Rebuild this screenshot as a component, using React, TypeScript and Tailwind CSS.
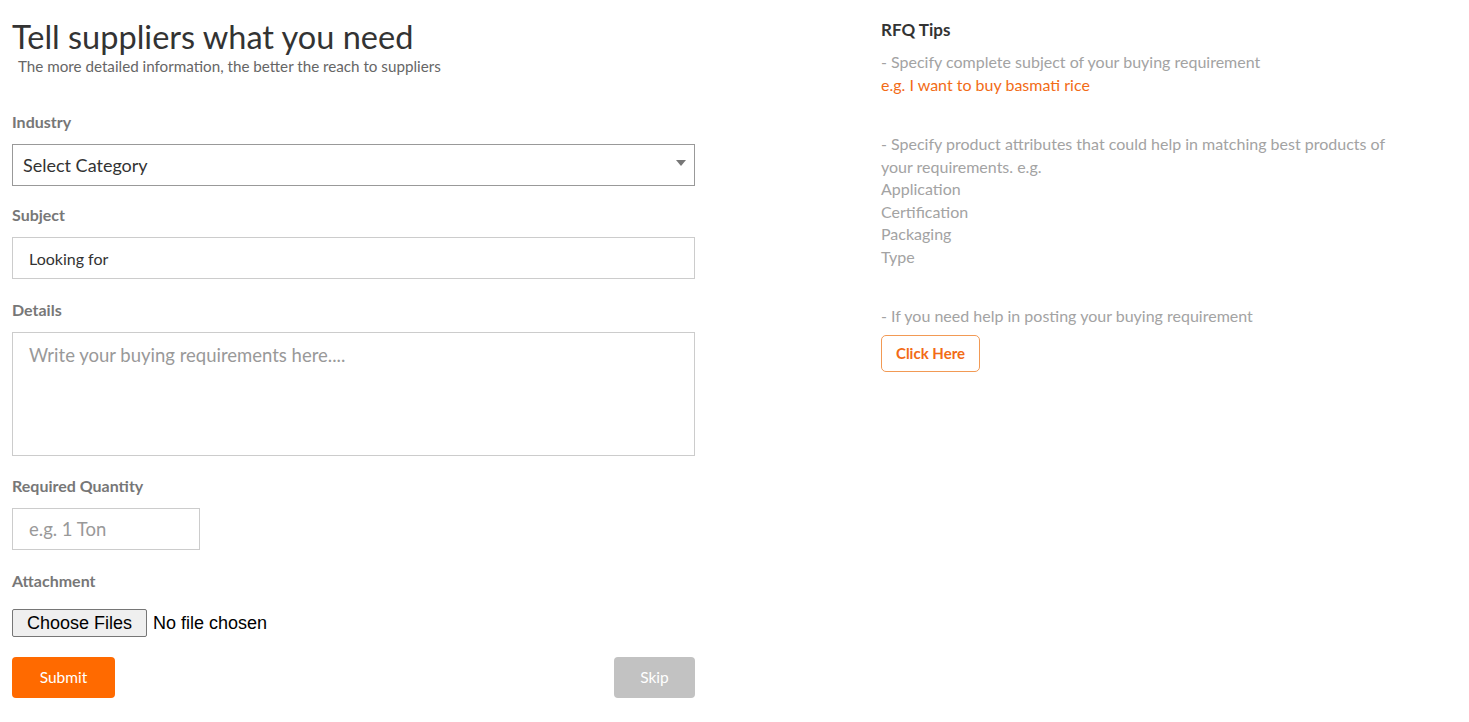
import { ChangeEvent, useState } from 'react';

const font = { fontFamily: 'Lato, "Open Sans", "Liberation Sans", sans-serif' };

function Label({ children }: { children: string }) {
  return <div className="text-[16px] font-bold leading-[20px] text-[#777]">{children}</div>;
}

export default function App() {
  const [fileName, setFileName] = useState('');

  function onFile(e: ChangeEvent<HTMLInputElement>) {
    const files = e.target.files;
    setFileName(files && files.length ? `${files.length} file${files.length > 1 ? 's' : ''}` : '');
  }

  return (
    <div className="flex min-h-[722px] bg-white" style={font}>
      {/* request form */}
      <form className="ml-[12px] w-[683px] pt-[17px]" onSubmit={(e) => e.preventDefault()}>
        <h1 className="text-[32.5px] leading-[40px] text-[#333]">Tell suppliers what you need</h1>
        <p className="ml-[6px] text-[15.2px] leading-[18px] text-[#666]">
          The more detailed information, the better the reach to suppliers
        </p>

        <div className="mt-[37px]">
          <Label>Industry</Label>
          <div className="relative mt-[12px]">
            <select className="h-[42px] w-full appearance-none border border-[#999] bg-white pl-[10px] text-[18px] text-[#333] outline-none">
              <option>Select Category</option>
              <option>Agriculture</option>
              <option>Apparel</option>
              <option>Chemicals</option>
            </select>
            <span className="pointer-events-none absolute right-[9px] top-[16px] h-0 w-0 border-x-[5px] border-t-[6px] border-x-transparent border-t-[#777]" />
          </div>
        </div>

        <div className="mt-[19px]">
          <Label>Subject</Label>
          <input
            defaultValue="Looking for"
            className="mt-[12px] h-[42px] w-full border border-[#ccc] pl-[16px] text-[16px] text-[#333] outline-none"
          />
        </div>

        <div className="mt-[21px]">
          <Label>Details</Label>
          <textarea
            placeholder="Write your buying requirements here...."
            className="mt-[12px] block h-[124px] w-full resize-none border border-[#ccc] px-[16px] pt-[10px] text-[18.5px] leading-[24px] text-[#333] outline-none placeholder:text-[#999]"
          />
        </div>

        <div className="mt-[20px]">
          <Label>Required Quantity</Label>
          <input
            placeholder="e.g. 1 Ton"
            className="mt-[12px] h-[42px] w-[188px] border border-[#ccc] pl-[16px] text-[18.5px] text-[#333] outline-none placeholder:text-[#999]"
          />
        </div>

        <div className="mt-[21px]">
          <Label>Attachment</Label>
          <label
            className="mt-[18px] flex cursor-pointer items-center gap-[6px] text-[18px] text-black"
            style={{ fontFamily: '"Liberation Sans", Arial, sans-serif' }}
          >
            <span className="rounded-[2px] border border-[#767676] bg-[#efefef] px-[14px] leading-[26px]">Choose Files</span>
            <span>{fileName || 'No file chosen'}</span>
            <input type="file" multiple className="hidden" onChange={onFile} />
          </label>
        </div>

        <div className="mt-[20px] flex justify-between">
          <button type="submit" className="h-[41px] w-[103px] rounded-[4px] bg-[#ff6a00] text-[15.5px] text-white">
            Submit
          </button>
          <button type="button" className="h-[41px] w-[81px] rounded-[4px] bg-[#c2c2c2] text-[15.5px] text-white">
            Skip
          </button>
        </div>
      </form>

      {/* tips column */}
      <aside className="ml-[186px] w-[520px] pt-[19px] text-[16px] leading-[22.5px] text-[#a3a3a3]">
        <h2 className="text-[17px] font-bold leading-[22px] text-[#333]">RFQ Tips</h2>
        <p className="mt-[10px]">- Specify complete subject of your buying requirement</p>
        <p className="text-[#f26b16]">e.g. I want to buy basmati rice</p>

        <p className="mt-[37px]">- Specify product attributes that could help in matching best products of your requirements. e.g.</p>
        <p>Application</p>
        <p>Certification</p>
        <p>Packaging</p>
        <p>Type</p>

        <p className="mt-[37px]">- If you need help in posting your buying requirement</p>
        <button
          type="button"
          className="mt-[7px] h-[37px] w-[99px] rounded-[5px] border border-[#f29a55] text-[15px] font-bold text-[#f26b16]"
        >
          Click Here
        </button>
      </aside>
    </div>
  );
}
